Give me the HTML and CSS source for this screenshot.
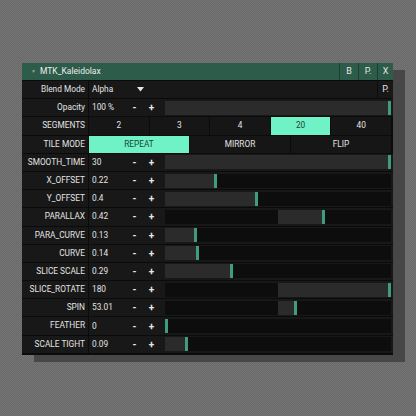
FILE: index.html
```html
<!DOCTYPE html>
<html lang="en">
<head>
    <meta charset="UTF-8">
    <title>MTK_Kaleidolax</title>
    <link rel="stylesheet" href="styles.css">
</head>
<body>
    <div class="panel">
        <div class="titlebar">
            <span class="caret">&#9660;</span>
            <span class="title">MTK_Kaleidolax</span>
            <div class="tbtn">B</div>
            <div class="tbtn">P.</div>
            <div class="tbtn">X</div>
        </div>

        <div class="row">
            <div class="label">Blend Mode</div>
            <div class="body blend">
                <span class="value">Alpha</span>
                <svg class="drop" width="7" height="5" viewBox="0 0 7 5"><path d="M0 0h7L3.5 4.5z" fill="#e6e6e6"/></svg>
            </div>
            <div class="pcell">P.</div>
        </div>

        <div class="row">
            <div class="label">Opacity</div>
            <div class="body">
                <span class="value">100 %</span>
                <span class="step">-</span><span class="step">+</span>
                <div class="track full"><div class="fill" style="left:0;width:100%"></div></div>
            </div>
        </div>

        <div class="row">
            <div class="label">SEGMENTS</div>
            <div class="body choices">
                <div class="choice">2</div>
                <div class="choice">3</div>
                <div class="choice">4</div>
                <div class="choice on">20</div>
                <div class="choice">40</div>
            </div>
        </div>

        <div class="row">
            <div class="label">TILE MODE</div>
            <div class="body choices">
                <div class="choice on">REPEAT</div>
                <div class="choice">MIRROR</div>
                <div class="choice">FLIP</div>
            </div>
        </div>

        <div class="row">
            <div class="label">SMOOTH_TIME</div>
            <div class="body">
                <span class="value">30</span>
                <span class="step">-</span><span class="step">+</span>
                <div class="track full"><div class="fill" style="left:0;width:100%"></div></div>
            </div>
        </div>

        <div class="row">
            <div class="label">X_OFFSET</div>
            <div class="body">
                <span class="value">0.22</span>
                <span class="step">-</span><span class="step">+</span>
                <div class="track"><div class="fill" style="left:0;width:23%"></div></div>
            </div>
        </div>

        <div class="row">
            <div class="label">Y_OFFSET</div>
            <div class="body">
                <span class="value">0.4</span>
                <span class="step">-</span><span class="step">+</span>
                <div class="track"><div class="fill" style="left:0;width:41%"></div></div>
            </div>
        </div>

        <div class="row">
            <div class="label">PARALLAX</div>
            <div class="body">
                <span class="value">0.42</span>
                <span class="step">-</span><span class="step">+</span>
                <div class="track"><div class="fill" style="left:50%;width:21%"></div></div>
            </div>
        </div>

        <div class="row">
            <div class="label">PARA_CURVE</div>
            <div class="body">
                <span class="value">0.13</span>
                <span class="step">-</span><span class="step">+</span>
                <div class="track"><div class="fill" style="left:0;width:14%"></div></div>
            </div>
        </div>

        <div class="row">
            <div class="label">CURVE</div>
            <div class="body">
                <span class="value">0.14</span>
                <span class="step">-</span><span class="step">+</span>
                <div class="track"><div class="fill" style="left:0;width:15%"></div></div>
            </div>
        </div>

        <div class="row">
            <div class="label">SLICE SCALE</div>
            <div class="body">
                <span class="value">0.29</span>
                <span class="step">-</span><span class="step">+</span>
                <div class="track"><div class="fill" style="left:0;width:30%"></div></div>
            </div>
        </div>

        <div class="row">
            <div class="label">SLICE_ROTATE</div>
            <div class="body">
                <span class="value">180</span>
                <span class="step">-</span><span class="step">+</span>
                <div class="track"><div class="fill" style="left:50%;width:50%"></div></div>
            </div>
        </div>

        <div class="row">
            <div class="label">SPIN</div>
            <div class="body">
                <span class="value">53.01</span>
                <span class="step">-</span><span class="step">+</span>
                <div class="track"><div class="fill" style="left:50%;width:8.5%"></div></div>
            </div>
        </div>

        <div class="row">
            <div class="label">FEATHER</div>
            <div class="body">
                <span class="value">0</span>
                <span class="step">-</span><span class="step">+</span>
                <div class="track"><div class="fill" style="left:0;width:0"></div></div>
            </div>
        </div>

        <div class="row">
            <div class="label">SCALE TIGHT</div>
            <div class="body">
                <span class="value">0.09</span>
                <span class="step">-</span><span class="step">+</span>
                <div class="track"><div class="fill" style="left:0;width:10%"></div></div>
            </div>
        </div>
    </div>
</body>
</html>
```

FILE: styles.css
```css
html, body {
    margin: 0;
    height: 100%;
}

body {
    padding: 63px 0 0 22px;
    box-sizing: border-box;
    font-family: Roboto, "Noto Sans", sans-serif;
    font-size: 8.3px;
    color: #e4e4e4;
    background: repeating-conic-gradient(#6a6a6a 0 25%, #747474 0 50%) 0 0 / 2px 2px;
}

.panel {
    width: 371px;
    background: #0b0b0b;
    padding-bottom: 1px;
    box-shadow: 12px 7px 0 #474747;
}

/* header */
.titlebar {
    height: 18px;
    display: flex;
    align-items: stretch;
    background: #2e5c4b;
    border-bottom: 1px solid #0b0b0b;
    box-sizing: border-box;
}

.caret {
    width: 14px;
    font-size: 5px;
    color: #8fa69c;
    text-align: right;
    line-height: 17px;
}

.title {
    flex: 1;
    padding-left: 4px;
    font-size: 8.5px;
    line-height: 17px;
    color: #ececec;
}

.tbtn {
    width: 18px;
    border-left: 1px solid #1e3e33;
    text-align: center;
    font-size: 9px;
    line-height: 17px;
    color: #e4e4e4;
}

.tbtn:last-child {
    width: 15px;
}

/* rows */
.row {
    height: 18.2px;
    display: flex;
    border-bottom: 1px solid #0b0b0b;
    box-sizing: border-box;
    background: #181818;
}

.label {
    width: 67px;
    border-right: 1px solid #0b0b0b;
    text-align: right;
    padding-right: 3px;
    box-sizing: border-box;
    line-height: 17px;
    white-space: nowrap;
    flex-shrink: 0;
}

.body {
    flex: 1;
    display: flex;
    align-items: center;
    padding-left: 3px;
    padding-right: 2px;
}

.value {
    width: 34px;
    line-height: 17px;
}

.step {
    width: 17px;
    text-align: center;
    font-size: 10px;
    font-weight: bold;
    color: #e8e8e8;
}

.step:last-of-type {
    margin-right: 5px;
}

.track {
    position: relative;
    flex: 1;
    height: 14px;
    background: #0d0d0d;
}

.track.full {
    background: #2a2a2a;
}

.fill {
    position: absolute;
    top: 0;
    bottom: 0;
    min-width: 3px;
    box-sizing: border-box;
    background: #2b2b2b;
    border-right: 3px solid #3f9c7d;
}

/* blend mode */
.blend .drop {
    margin-left: 11px;
}

.pcell {
    width: 15px;
    border-left: 1px solid #0b0b0b;
    text-align: center;
    line-height: 17px;
    font-size: 9px;
    color: #e4e4e4;
}

/* button groups */
.choices {
    padding-left: 0;
    align-items: stretch;
    gap: 1px;
    background: #0b0b0b;
    padding-right: 2px;
}

.choice {
    flex: 1;
    background: #161616;
    text-align: center;
    line-height: 17px;
}

.choice.on {
    background: #6ff3c6;
    color: #1f4338;
}
```
